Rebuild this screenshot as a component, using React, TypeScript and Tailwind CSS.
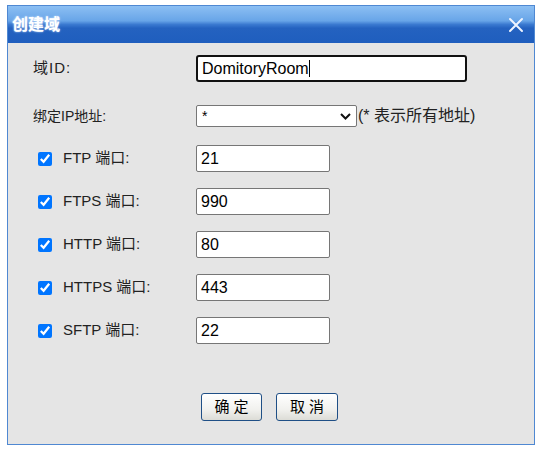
const font = "font-['Liberation_Sans','Noto_Sans_CJK_SC',sans-serif]";

const ports = [
  { name: 'FTP', value: '21' },
  { name: 'FTPS', value: '990' },
  { name: 'HTTP', value: '80' },
  { name: 'HTTPS', value: '443' },
  { name: 'SFTP', value: '22' },
];

export default function App() {
  return (
    <div className={`w-[539px] h-[449px] bg-white pt-[5px] pl-[7px] ${font}`}>
      <div className="w-[528px] h-[440px] border border-[#4f88d2] bg-[#e5e5e5] flex flex-col">
        {/* title bar */}
        <div className="h-[37px] flex items-center justify-between pl-[4px] pr-[10px] bg-[linear-gradient(to_bottom,#8cbff3_0%,#68a5e8_40%,#3a79d0_50%,#2462c0_60%,#1f5ebe_100%)]">
          <span className="text-white font-bold text-[16px] [text-shadow:0_0_2px_#dbe9ff]">创建域</span>
          <svg width="16" height="16" viewBox="0 0 16 16" className="mt-[1px]">
            <path d="M2 2 L14 14 M14 2 L2 14" stroke="#eef4ff" strokeWidth="2" strokeLinecap="round" />
          </svg>
        </div>

        <div className="flex flex-col pl-[25px] text-[15px] text-[#222]">
          {/* domain id */}
          <div className="flex items-center mt-[12px] h-[27px]">
            <span className="w-[163px] tracking-[1px]">域ID:</span>
            <div className="w-[271px] h-[27px] border-2 border-[#111] rounded-[3px] bg-white flex items-center pl-[4px] text-[16px] text-black">
              DomitoryRoom<span className="w-px h-[17px] bg-black" />
            </div>
          </div>

          {/* bind ip */}
          <div className="flex items-center mt-[23px] h-[22px]">
            <span className="w-[163px] text-[14px]">绑定IP地址:</span>
            <div className="w-[161px] h-[22px] border border-[#767676] rounded-[2px] bg-white flex items-center justify-between pl-[5px] pr-[5px] text-[14px] text-black">
              <span>*</span>
              <svg width="11" height="7" viewBox="0 0 11 7">
                <path d="M1 1 L5.5 5.5 L10 1" fill="none" stroke="#111" strokeWidth="2" />
              </svg>
            </div>
            <span className="ml-[1px] text-[16px]">(* 表示所有地址)</span>
          </div>

          {/* ports */}
          <div className="flex flex-col gap-[16px] mt-[18px]">
            {ports.map(p => (
              <div key={p.name} className="flex items-center h-[27px]">
                <div className="w-[163px] flex items-center pl-[5px]">
                  <input type="checkbox" defaultChecked className="w-[14px] h-[14px] m-0 accent-[#0075ff]" />
                  <span className="ml-[11px]">{p.name} 端口:</span>
                </div>
                <div className="w-[134px] h-[27px] border border-[#767676] rounded-[2px] bg-white flex items-center pl-[4px] text-[16px] text-black">
                  {p.value}
                </div>
              </div>
            ))}
          </div>

          {/* buttons */}
          <div className="flex gap-[14px] mt-[49px] pl-[168px]">
            <button className="w-[61px] h-[28px] border border-[#1f4f86] rounded-[3px] bg-[linear-gradient(to_bottom,#ffffff,#f1f1ee_60%,#dcdcd6)] text-[15px] text-black">
              确 定
            </button>
            <button className="w-[62px] h-[28px] border border-[#1f4f86] rounded-[3px] bg-[linear-gradient(to_bottom,#ffffff,#f1f1ee_60%,#dcdcd6)] text-[15px] text-black">
              取 消
            </button>
          </div>
        </div>
      </div>
    </div>
  );
}
